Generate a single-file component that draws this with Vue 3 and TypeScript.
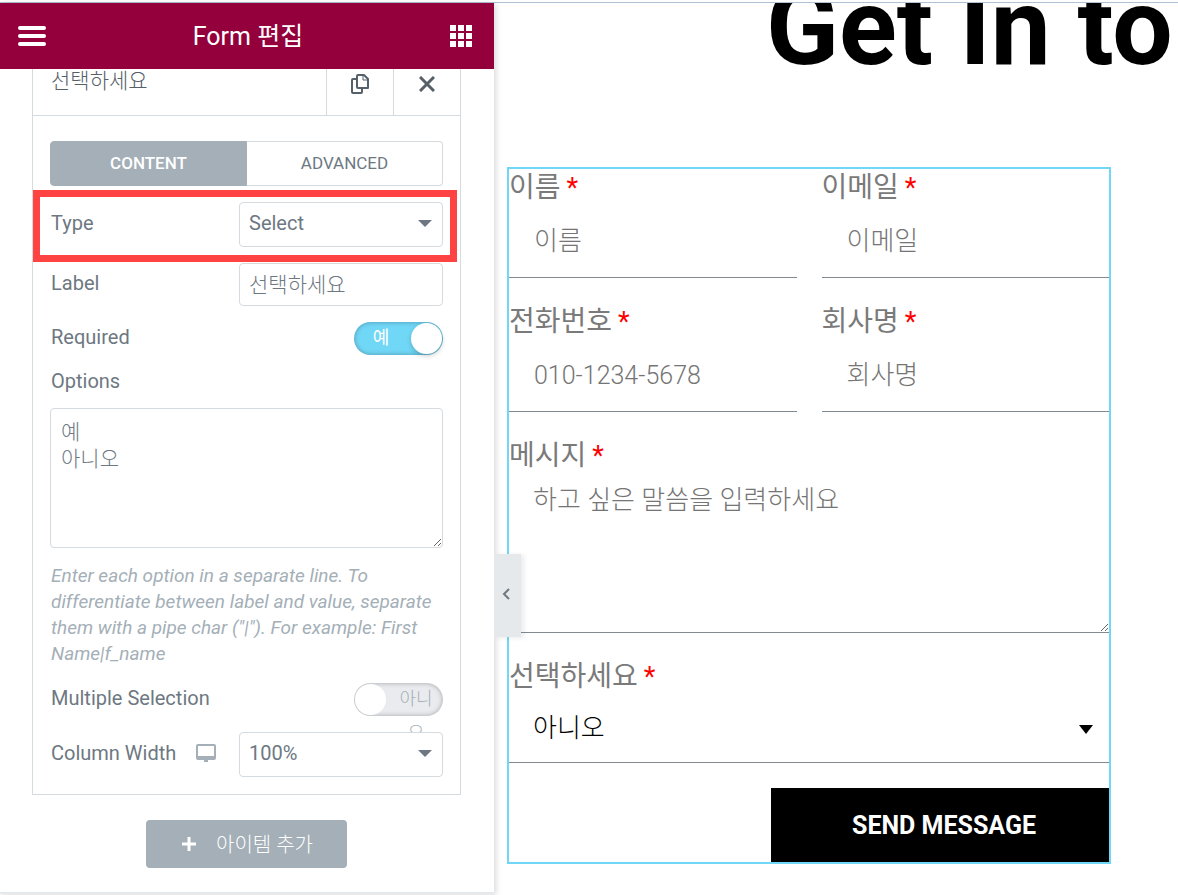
<script setup lang="ts">
import { ref } from 'vue'

interface Field {
  id: string
  label: string
  placeholder: string
  type: string
}

const fields: Field[] = [
  { id: 'name', label: '이름', placeholder: '이름', type: 'text' },
  { id: 'email', label: '이메일', placeholder: '이메일', type: 'email' },
  { id: 'phone', label: '전화번호', placeholder: '010-1234-5678', type: 'tel' },
  { id: 'company', label: '회사명', placeholder: '회사명', type: 'text' },
]

const tab = ref<'content' | 'advanced'>('content')
const fieldType = ref('Select')
const label = ref('선택하세요')
const required = ref(true)
const options = ref('예\n아니오')
const multiple = ref(false)
const columnWidth = ref('100%')
const choice = ref('아니오')
</script>

<template>
  <div class="editor">
    <aside class="panel">
      <header class="panel-head">
        <button class="icon-btn" type="button" aria-label="Menu">
          <svg width="28" height="20" viewBox="0 0 28 20">
            <path d="M2 2h24M2 10h24M2 18h24" stroke="#fff" stroke-width="4" stroke-linecap="round" />
          </svg>
        </button>
        <h1>Form 편집</h1>
        <button class="icon-btn" type="button" aria-label="Widgets">
          <svg width="22" height="22" viewBox="0 0 22 22" fill="#fff">
            <path d="M0 0h6v6H0zM8 0h6v6H8zM16 0h6v6h-6zM0 8h6v6H0zM8 8h6v6H8zM16 8h6v6h-6zM0 16h6v6H0zM8 16h6v6H8zM16 16h6v6h-6z" />
          </svg>
        </button>
      </header>

      <div class="panel-body">
        <section class="item">
          <div class="item-head">
            <button class="item-title ko" type="button">{{ label }}</button>
            <button class="item-tool" type="button" aria-label="Duplicate">
              <svg width="18" height="20" viewBox="0 0 18 20" fill="none" stroke="#556068" stroke-width="2" stroke-linejoin="round">
                <path d="M7 1h6l4 4v9H7a1 1 0 0 1-1-1V2a1 1 0 0 1 1-1z" />
                <path d="M12 1v5h5" stroke-width="1" />
                <path d="M6 5H2a1 1 0 0 0-1 1v12a1 1 0 0 0 1 1h8a1 1 0 0 0 1-1v-4" />
              </svg>
            </button>
            <button class="item-tool" type="button" aria-label="Remove">
              <svg width="16" height="16" viewBox="0 0 16 16" fill="none" stroke="#556068" stroke-width="3">
                <path d="M1 1l14 14M15 1L1 15" />
              </svg>
            </button>
          </div>

          <div class="item-body">
            <div class="tabs">
              <button type="button" :class="{ active: tab === 'content' }" @click="tab = 'content'">CONTENT</button>
              <button type="button" :class="{ active: tab === 'advanced' }" @click="tab = 'advanced'">ADVANCED</button>
            </div>

            <div class="row row-type">
              <label for="c-type">Type</label>
              <div class="select">
                <select id="c-type" v-model="fieldType"><option>Select</option><option>Text</option></select>
                <svg width="14" height="8" viewBox="0 0 14 8"><path d="M0 0h14L7 7z" fill="#6d7882" /></svg>
              </div>
              <div class="highlight"></div>
            </div>

            <div class="row">
              <label for="c-label">Label</label>
              <input id="c-label" v-model="label" class="text ko" type="text" />
            </div>

            <div class="row">
              <label for="c-required">Required</label>
              <div class="switch" :class="{ on: required }">
                <input id="c-required" v-model="required" type="checkbox" />
                <span class="switch-text">{{ required ? '예' : '아니오' }}</span>
                <span class="knob"></span>
              </div>
            </div>

            <label class="block-label" for="c-options">Options</label>
            <textarea id="c-options" v-model="options" class="options ko"></textarea>
            <p class="help">
              Enter each option in a separate line. To differentiate between label and value, separate them with a pipe
              char ("|"). For example: First Name|f_name
            </p>

            <div class="row">
              <label for="c-multiple">Multiple Selection</label>
              <div class="switch" :class="{ on: multiple }">
                <input id="c-multiple" v-model="multiple" type="checkbox" />
                <span class="switch-text">{{ multiple ? '예' : '아니오' }}</span>
                <span class="knob"></span>
              </div>
            </div>

            <div class="row row-width">
              <label for="c-width">Column Width</label>
              <button class="device" type="button" aria-label="Desktop">
                <svg width="20" height="18" viewBox="0 0 20 18" fill="#a4afb7">
                  <path fill-rule="evenodd" d="M2 0h16a2 2 0 0 1 2 2v12a2 2 0 0 1-2 2h-6v2H8v-2H2a2 2 0 0 1-2-2V2a2 2 0 0 1 2-2zM2 2v10h16V2z" />
                </svg>
              </button>
              <div class="select">
                <select id="c-width" v-model="columnWidth"><option>100%</option><option>50%</option></select>
                <svg width="14" height="8" viewBox="0 0 14 8"><path d="M0 0h14L7 7z" fill="#6d7882" /></svg>
              </div>
            </div>
          </div>
        </section>

        <button class="add" type="button">
          <svg width="14" height="14" viewBox="0 0 14 14"><path d="M7 0v14M0 7h14" stroke="#fff" stroke-width="3" /></svg>
          <span>아이템 추가</span>
        </button>
      </div>

      <button class="collapse" type="button" aria-label="Hide panel">
        <svg width="8" height="12" viewBox="0 0 8 12" fill="none" stroke="#6d7882" stroke-width="2">
          <path d="M7 1L2 6l5 5" />
        </svg>
      </button>
    </aside>

    <main class="preview">
      <h2>Get In to</h2>
      <form class="form" @submit.prevent>
        <div v-for="f in fields" :key="f.id" class="field">
          <label :for="f.id">{{ f.label }}<em>*</em></label>
          <input :id="f.id" :type="f.type" :placeholder="f.placeholder" />
        </div>
        <div class="field wide">
          <label for="message">메시지<em>*</em></label>
          <textarea id="message" placeholder="하고 싶은 말씀을 입력하세요"></textarea>
        </div>
        <div class="field wide">
          <label for="choice">선택하세요<em>*</em></label>
          <div class="form-select">
            <select id="choice" v-model="choice"><option>예</option><option>아니오</option></select>
            <svg width="14" height="9" viewBox="0 0 14 9"><path d="M0 0h14L7 9z" fill="#000" /></svg>
          </div>
        </div>
        <button class="send" type="submit">SEND MESSAGE</button>
      </form>
    </main>
  </div>
</template>

<style>
body {
  margin: 0;
  background: #fff;
}
</style>

<style scoped>
* {
  box-sizing: border-box;
}

button,
input,
select,
textarea {
  margin: 0;
  padding: 0;
  border: 0;
  border-radius: 0;
  background: none;
  color: inherit;
  font: inherit;
  outline: 0;
}

button {
  cursor: pointer;
}

select {
  appearance: none;
}

svg {
  display: block;
}

.editor {
  display: flex;
  min-height: 100vh;
  padding-top: 3px;
  overflow: hidden;
  background: linear-gradient(#fff 2px, #b0c2d4 2px, #b0c2d4 3px, #fff 3px);
  font-family: Roboto, 'Noto Sans CJK KR', sans-serif;
}

.panel {
  position: relative;
  z-index: 1;
  display: flex;
  flex-direction: column;
  flex: 0 0 494px;
  margin-bottom: 1px;
  border-bottom: 2px solid #e6e9ec;
  background: #fff;
  box-shadow: 2px 1px 6px rgba(0, 0, 0, 0.15);
  color: #6d7882;
  font-size: 20px;
}

.panel-head {
  display: flex;
  align-items: center;
  justify-content: space-between;
  height: 66px;
  padding: 0 22px 0 18px;
  background: #93003c;
  color: #fff;
}

.panel-head h1 {
  margin: 0;
  padding-top: 2px;
  font-size: 25px;
  font-weight: 400;
  line-height: 36px;
}

.panel-body {
  display: flex;
  flex-direction: column;
  align-items: center;
  padding: 0 33px 0 32px;
}

.ko {
  font-size: 21px;
  font-weight: 300;
}

.item {
  width: 100%;
  border: 1px solid #d5dadf;
  border-top: 0;
}

.item-head {
  display: flex;
  height: 47px;
  border-bottom: 1px solid #d5dadf;
  color: #556068;
}

.item-title {
  flex: 1;
  padding: 0 0 22px 18px;
  line-height: 24px;
  text-align: left;
}

.item-tool {
  display: flex;
  justify-content: center;
  width: 67px;
  padding-top: 5px;
  border-left: 1px solid #d5dadf;
}

.item-tool:last-child {
  padding-top: 7px;
}

.item-body {
  padding: 25px 17px 17px;
}

.tabs {
  display: flex;
  height: 45px;
  border-radius: 4px;
  font-size: 17px;
}

.tabs button {
  flex: 1;
  padding-bottom: 2px;
  border: 1px solid #d5dadf;
  border-left: 0;
  border-radius: 0 4px 4px 0;
}

.tabs button:first-child {
  border-left: 1px solid #d5dadf;
  border-radius: 4px 0 0 4px;
}

.tabs .active,
.tabs .active:first-child {
  border-color: #a4afb7;
  background: #a4afb7;
  color: #fff;
  font-weight: 500;
}

.row {
  display: flex;
  align-items: center;
  justify-content: space-between;
  margin-top: 16px;
}

.row label {
  padding: 0 0 3px 1px;
}

.row-type,
.row-width {
  position: relative;
}

.highlight {
  position: absolute;
  inset: -12px -14px -15px -17px;
  border: 7px solid #ff4242;
  pointer-events: none;
}

.device {
  margin: 0 auto 4px 20px;
}

.select {
  position: relative;
  width: 204px;
  height: 45px;
}

.select select {
  width: 100%;
  height: 100%;
  padding: 0 30px 3px 9px;
  border: 1px solid #d5dadf;
  border-radius: 4px;
  background: #fff;
}

.select svg {
  position: absolute;
  top: 18px;
  right: 11px;
  pointer-events: none;
}

.text {
  width: 204px;
  height: 43px;
  padding: 0 9px 3px;
  border: 1px solid #d5dadf;
  border-radius: 4px;
}

.switch {
  position: relative;
  width: 89px;
  height: 33px;
}

.switch input {
  display: block;
  width: 100%;
  height: 100%;
  appearance: none;
  border-radius: 17px;
  background: #e9ebee;
  box-shadow: inset 0 0 5px rgba(0, 0, 0, 0.3);
}

.switch.on input {
  background: #71d7f7;
}

.switch-text {
  position: absolute;
  top: -1px;
  right: 8px;
  width: 38px;
  color: #a4afb7;
  font-size: 18px;
  font-weight: 300;
  line-height: 34px;
  text-align: center;
  pointer-events: none;
}

.on .switch-text {
  right: auto;
  left: 8px;
  color: #fff;
  font-weight: 400;
}

.knob {
  position: absolute;
  top: 1px;
  left: 1px;
  width: 31px;
  height: 31px;
  border-radius: 50%;
  background: #fff;
  pointer-events: none;
}

.on .knob {
  right: 1px;
  left: auto;
  box-shadow: 0 2px 5px rgba(0, 0, 0, 0.2);
}

.block-label {
  display: block;
  margin-top: 14px;
  padding-left: 1px;
  line-height: 24px;
}

.options {
  display: block;
  width: 100%;
  height: 140px;
  margin-top: 15px;
  padding: 10px;
  border: 1px solid #d5dadf;
  border-radius: 4px;
  line-height: 27px;
  resize: vertical;
}

.help {
  margin: 15px 0 0;
  padding-left: 1px;
  color: #a4afb7;
  font-size: 19px;
  font-style: italic;
  line-height: 26px;
}

.add {
  display: flex;
  align-items: center;
  gap: 20px;
  height: 48px;
  margin-top: 25px;
  padding: 0 34px 0 36px;
  border-radius: 4px;
  background: #a4afb7;
  color: #fff;
}

.add span {
  padding-bottom: 2px;
  font-weight: 300;
}

.collapse {
  position: absolute;
  top: 551px;
  left: 100%;
  display: flex;
  align-items: center;
  justify-content: center;
  width: 27px;
  height: 83px;
  padding: 0 3px 4px 0;
  background: #e6e9ec;
  box-shadow: 3px 1px 5px rgba(0, 0, 0, 0.08);
}

.preview {
  flex: 1;
  min-width: 0;
  overflow: hidden;
}

.preview h2 {
  margin: 0 0 114px 272px;
  color: #000;
  font-size: 107px;
  font-weight: 700;
  line-height: 50px;
  white-space: nowrap;
}

.form {
  display: grid;
  grid-template-columns: 1fr 1fr;
  gap: 25px;
  margin: 0 67px 0 13px;
  border: 2px solid #71d7f7;
  color: #7a7a7a;
}

.field {
  display: flex;
  flex-direction: column;
  min-width: 0;
}

.wide {
  grid-column: 1 / -1;
}

.field label {
  height: 36px;
  font-size: 28px;
  line-height: 38px;
}

.field em {
  margin-left: 6px;
  color: #f00;
  font-size: 27px;
  font-style: normal;
}

.field input,
.field textarea,
.form-select {
  border-bottom: 1px solid #818a91;
  font-size: 26px;
  font-weight: 300;
}

.field input {
  height: 73px;
  padding: 0 25px;
}

.field input[type='tel'] {
  font-size: 25px;
}

.field textarea {
  height: 160px;
  padding: 8px 24px;
  line-height: 38px;
  resize: vertical;
}

.field ::placeholder {
  color: #757575;
  opacity: 1;
}

.form-select {
  position: relative;
  height: 69px;
  color: #000;
}

.form-select select {
  width: 100%;
  height: 100%;
  padding: 0 48px 0 24px;
}

.form-select svg {
  position: absolute;
  top: 31px;
  right: 16px;
  pointer-events: none;
}

.send {
  grid-column: 1 / -1;
  justify-self: end;
  height: 74px;
  padding: 0 73px 0 81px;
  background: #000;
  color: #fff;
  font-size: 25px;
  font-weight: 700;
}
</style>
